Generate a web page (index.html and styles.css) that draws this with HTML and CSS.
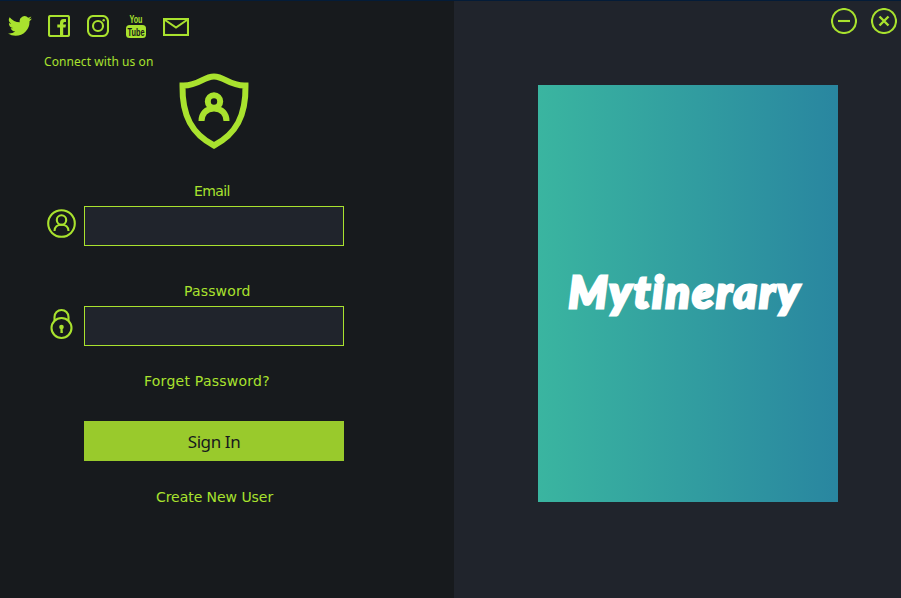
FILE: index.html
```html
<!DOCTYPE html>
<html lang="en">
<head>
<meta charset="utf-8">
<title>Mytinerary</title>
<link rel="stylesheet" href="styles.css">
</head>
<body>
<div class="window">
  <main class="login">
    <nav class="social">
      <svg class="twitter" viewBox="0 0 24 24"><path d="M23.95 4.57a10 10 0 0 1-2.82.77 4.96 4.96 0 0 0 2.160-2.720 10 10 0 0 1-3.120 1.180 4.920 4.920 0 0 0-8.390 4.490A14 14 0 0 1 1.640 3.160a4.920 4.920 0 0 0 1.520 6.570 4.900 4.900 0 0 1-2.230-.610v.060a4.920 4.920 0 0 0 3.950 4.830 5 5 0 0 1-2.210.080 4.940 4.940 0 0 0 4.600 3.420A9.870 9.870 0 0 1 0 19.540a14 14 0 0 0 7.550 2.210A13.940 13.940 0 0 0 21.500 7.130a10 10 0 0 0 2.450-2.560z"/></svg>
      <svg class="facebook" viewBox="0 0 22 22"><rect class="line" x="1" y="1" width="20" height="20" rx="1.500"/><path d="M12 20.500V12.500H9.300V9.500H12V8Q12 4 15.500 4H18V7H16.500Q15.200 7 15.200 8.500V9.500H18L17.500 12.500H15.200V20.500Z"/></svg>
      <svg class="instagram" viewBox="0 0 22 22"><rect class="line" x="1" y="1" width="20" height="20" rx="5.500"/><circle class="line" cx="11" cy="11" r="5"/><circle cx="16.700" cy="5.300" r="1.200"/></svg>
      <svg class="youtube" viewBox="0 0 20 28"><text class="you" x="3.500" y="11" textLength="13" lengthAdjust="spacingAndGlyphs">You</text><rect y="13" width="20" height="13" rx="3.500"/><text class="tube" x="1.500" y="24" textLength="17" lengthAdjust="spacingAndGlyphs">Tube</text></svg>
      <svg class="mail" viewBox="0 0 26 18"><rect class="line" x="1" y="1" width="24" height="16"/><path class="line" d="M2 2l11 7.500L24 2"/></svg>
    </nav>
    <p class="connect">Connect with us on</p>
    <svg class="shield" viewBox="0 0 70 76"><path class="outline" d="M3.500 12.500C20 13 24 3.500 35 3.500S50 13 66.500 12.500C67 43 57 61 35 72.500C13 61 3 43 3.500 12.500Z"/><circle class="outline" cx="35" cy="28.500" r="6.200"/><path class="outline" d="M22.500 48C22.500 41 27 35.500 35 35.500S47.500 41 47.500 48"/></svg>
    <label class="caption email" for="email">Email</label>
    <div class="field">
      <svg class="user" viewBox="0 0 30 30"><circle class="line" cx="15.500" cy="15.500" r="13.300"/><circle class="line" cx="15.500" cy="12" r="4.700"/><path class="line" d="M8.500 23C8.500 19 11.500 16.700 15.500 16.700S22.500 19 22.500 23"/></svg>
      <input id="email" type="text">
    </div>
    <label class="caption password" for="password">Password</label>
    <div class="field">
      <svg class="lock" viewBox="0 0 30 32"><circle class="line" cx="15.500" cy="20" r="10"/><path class="line" d="M8.500 13V9A7 7 0 0 1 22.500 9V13"/><circle cx="15.500" cy="19" r="2.300"/><path d="M14.500 19h2l.4 6h-2.500z"/></svg>
      <input id="password" type="password">
    </div>
    <a class="caption forget">Forget Password?</a>
    <button class="signin">Sign In</button>
    <a class="caption create">Create New User</a>
  </main>
  <aside class="side">
    <div class="controls">
      <svg viewBox="0 0 26 26"><circle class="line" cx="13" cy="13" r="12"/><path class="line" d="M7 13h12"/></svg>
      <svg viewBox="0 0 26 26"><circle class="line" cx="13" cy="13" r="12"/><path class="line thick" d="M8.500 8.500l9 9M17.500 8.500l-9 9"/></svg>
    </div>
    <div class="poster"><span class="brand">Mytinerary</span></div>
  </aside>
</div>
</body>
</html>
```
FILE: styles.css
```css
* { box-sizing: border-box; }
body { margin: 0; background: #171a1d; }
svg { display: block; fill: #a9e22e; flex: none; }
.line, .outline { fill: none; stroke: #a9e22e; stroke-width: 2.1; }
.thick { stroke-width: 2.4; }
.outline { stroke-width: 6; }
.window { display: flex; width: 901px; height: 598px; border-top: 1px solid #041c38; overflow: hidden; }
.login { display: flex; flex-direction: column; align-items: flex-start; width: 454px; background: #171a1d; color: #a9e22e; }
.social { display: flex; align-items: center; height: 50px; padding-left: 8px; }
.twitter { width: 24px; height: 24px; margin-right: 16px; }
.facebook, .instagram { width: 22px; height: 22px; margin-right: 17px; }
.youtube { width: 20px; height: 28px; margin-right: 17px; overflow: visible; }
.mail { width: 26px; height: 18px; margin-top: 2px; }
.you, .tube { font: bold 11px "Liberation Sans", sans-serif; }
.tube { fill: #171a1d; }
.connect { margin: 0 0 0 44px; height: 22px; font: 12px/22px "Noto Sans", sans-serif; letter-spacing: .08px; white-space: nowrap; }
.shield { width: 70px; height: 76px; margin-left: 179px; }
.caption { font: 14px/20px "DejaVu Sans", sans-serif; white-space: nowrap; }
.email { margin: 32px 0 5px 194px; letter-spacing: -.6px; }
.password { margin: 35px 0 5px 184px; letter-spacing: .15px; }
.field { display: flex; margin-left: 46px; }
.user { width: 30px; height: 30px; margin: 2px 8px 0 0; }
.lock { width: 30px; height: 32px; margin: 2px 8px 0 0; }
input { width: 260px; height: 40px; padding: 0 8px; border: 1px solid #a9e22e; background: #20242c; color: #a9e22e; outline: 0; }
.forget { margin: 25px 0 30px 144px; letter-spacing: .25px; }
.signin { width: 260px; height: 40px; margin-left: 84px; padding: 2px 0 0; border: 0; background: #99ca2c; color: #171a1d; font: 17px/38px "Noto Sans", sans-serif; letter-spacing: -.4px; }
.create { margin: 26px 0 0 156px; letter-spacing: -.05px; }
.side { width: 447px; background: #20242c; }
.controls { display: flex; justify-content: flex-end; gap: 14px; height: 84px; padding: 7px 4px 0 0; }
.controls svg { width: 26px; height: 26px; }
.poster { display: flex; align-items: center; justify-content: center; width: 300px; height: 417px; padding: 0 6px 6px 0; margin-left: 84px; background: linear-gradient(90deg, #3ab5a0, #2986a0); }
.brand { color: #fff; font: italic 900 44px/54px Lato, sans-serif; -webkit-text-stroke: 3px #fff; letter-spacing: 2.4px; font-variant-ligatures: none; white-space: nowrap; }
```
